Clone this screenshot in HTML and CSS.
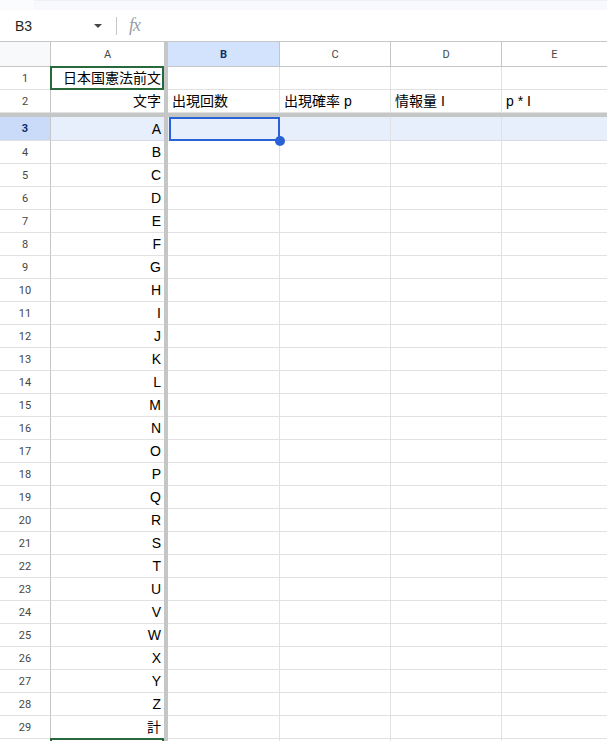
FILE: index.html
```html
<!DOCTYPE html>
<html lang="ja">
<head>
    <meta charset="UTF-8">
    <title>日本国憲法前文</title>
    <link rel="stylesheet" href="styles.css">
</head>
<body>
    <div class="top-strip"><div class="top-strip-inner"></div></div>

    <div class="formula-bar">
        <div class="name-box">
            <span class="name-ref">B3</span>
            <span class="name-arrow"></span>
        </div>
        <div class="fb-sep"></div>
        <span class="fx">fx</span>
    </div>

    <div class="sheet">
        <div class="row col-head">
            <div class="rh corner"></div>
            <div class="c a">A</div>
            <div class="fz"></div>
            <div class="c b sel-head">B</div>
            <div class="c">C</div>
            <div class="c">D</div>
            <div class="c e">E</div>
        </div>
        <div class="row">
            <div class="rh">1</div>
            <div class="c a r title-cell">日本国憲法前文</div>
            <div class="fz"></div>
            <div class="c b"></div>
            <div class="c"></div>
            <div class="c"></div>
            <div class="c e"></div>
        </div>
        <div class="row">
            <div class="rh">2</div>
            <div class="c a r">文字</div>
            <div class="fz"></div>
            <div class="c b">出現回数</div>
            <div class="c">出現確率 p</div>
            <div class="c">情報量 I</div>
            <div class="c e">p * I</div>
        </div>
        <div class="freeze-row"></div>
        <div class="row sel-row">
            <div class="rh">3</div>
            <div class="c a r">A</div>
            <div class="fz"></div>
            <div class="c b active"><span class="handle"></span></div>
            <div class="c"></div>
            <div class="c"></div>
            <div class="c e"></div>
        </div>
        <div class="row"><div class="rh">4</div><div class="c a r">B</div><div class="fz"></div><div class="c b"></div><div class="c"></div><div class="c"></div><div class="c e"></div></div>
        <div class="row"><div class="rh">5</div><div class="c a r">C</div><div class="fz"></div><div class="c b"></div><div class="c"></div><div class="c"></div><div class="c e"></div></div>
        <div class="row"><div class="rh">6</div><div class="c a r">D</div><div class="fz"></div><div class="c b"></div><div class="c"></div><div class="c"></div><div class="c e"></div></div>
        <div class="row"><div class="rh">7</div><div class="c a r">E</div><div class="fz"></div><div class="c b"></div><div class="c"></div><div class="c"></div><div class="c e"></div></div>
        <div class="row"><div class="rh">8</div><div class="c a r">F</div><div class="fz"></div><div class="c b"></div><div class="c"></div><div class="c"></div><div class="c e"></div></div>
        <div class="row"><div class="rh">9</div><div class="c a r">G</div><div class="fz"></div><div class="c b"></div><div class="c"></div><div class="c"></div><div class="c e"></div></div>
        <div class="row"><div class="rh">10</div><div class="c a r">H</div><div class="fz"></div><div class="c b"></div><div class="c"></div><div class="c"></div><div class="c e"></div></div>
        <div class="row"><div class="rh">11</div><div class="c a r">I</div><div class="fz"></div><div class="c b"></div><div class="c"></div><div class="c"></div><div class="c e"></div></div>
        <div class="row"><div class="rh">12</div><div class="c a r">J</div><div class="fz"></div><div class="c b"></div><div class="c"></div><div class="c"></div><div class="c e"></div></div>
        <div class="row"><div class="rh">13</div><div class="c a r">K</div><div class="fz"></div><div class="c b"></div><div class="c"></div><div class="c"></div><div class="c e"></div></div>
        <div class="row"><div class="rh">14</div><div class="c a r">L</div><div class="fz"></div><div class="c b"></div><div class="c"></div><div class="c"></div><div class="c e"></div></div>
        <div class="row"><div class="rh">15</div><div class="c a r">M</div><div class="fz"></div><div class="c b"></div><div class="c"></div><div class="c"></div><div class="c e"></div></div>
        <div class="row"><div class="rh">16</div><div class="c a r">N</div><div class="fz"></div><div class="c b"></div><div class="c"></div><div class="c"></div><div class="c e"></div></div>
        <div class="row"><div class="rh">17</div><div class="c a r">O</div><div class="fz"></div><div class="c b"></div><div class="c"></div><div class="c"></div><div class="c e"></div></div>
        <div class="row"><div class="rh">18</div><div class="c a r">P</div><div class="fz"></div><div class="c b"></div><div class="c"></div><div class="c"></div><div class="c e"></div></div>
        <div class="row"><div class="rh">19</div><div class="c a r">Q</div><div class="fz"></div><div class="c b"></div><div class="c"></div><div class="c"></div><div class="c e"></div></div>
        <div class="row"><div class="rh">20</div><div class="c a r">R</div><div class="fz"></div><div class="c b"></div><div class="c"></div><div class="c"></div><div class="c e"></div></div>
        <div class="row"><div class="rh">21</div><div class="c a r">S</div><div class="fz"></div><div class="c b"></div><div class="c"></div><div class="c"></div><div class="c e"></div></div>
        <div class="row"><div class="rh">22</div><div class="c a r">T</div><div class="fz"></div><div class="c b"></div><div class="c"></div><div class="c"></div><div class="c e"></div></div>
        <div class="row"><div class="rh">23</div><div class="c a r">U</div><div class="fz"></div><div class="c b"></div><div class="c"></div><div class="c"></div><div class="c e"></div></div>
        <div class="row"><div class="rh">24</div><div class="c a r">V</div><div class="fz"></div><div class="c b"></div><div class="c"></div><div class="c"></div><div class="c e"></div></div>
        <div class="row"><div class="rh">25</div><div class="c a r">W</div><div class="fz"></div><div class="c b"></div><div class="c"></div><div class="c"></div><div class="c e"></div></div>
        <div class="row"><div class="rh">26</div><div class="c a r">X</div><div class="fz"></div><div class="c b"></div><div class="c"></div><div class="c"></div><div class="c e"></div></div>
        <div class="row"><div class="rh">27</div><div class="c a r">Y</div><div class="fz"></div><div class="c b"></div><div class="c"></div><div class="c"></div><div class="c e"></div></div>
        <div class="row"><div class="rh">28</div><div class="c a r">Z</div><div class="fz"></div><div class="c b"></div><div class="c"></div><div class="c"></div><div class="c e"></div></div>
        <div class="row"><div class="rh">29</div><div class="c a r">計</div><div class="fz"></div><div class="c b"></div><div class="c"></div><div class="c"></div><div class="c e"></div></div>
        <div class="row"><div class="rh"></div><div class="c a r title-cell"></div><div class="fz"></div><div class="c b"></div><div class="c"></div><div class="c"></div><div class="c e"></div></div>
    </div>
</body>
</html>
```

FILE: styles.css
```css
body {
    margin: 0;
    background-color: #ffffff;
    font-family: "Liberation Sans", Arial, "Noto Sans CJK JP", sans-serif;
    color: #000000;
    overflow: hidden;
}
.top-strip {
    height: 10px;
    background-color: #fbfcfe;
    display: flex;
    justify-content: flex-end;
}
.top-strip-inner {
    width: calc(100% - 34px);
    border-top: 1px solid #edf0f6;
    background-color: #f8f9fd;
}
.formula-bar {
    height: 31px;
    border-bottom: 1px solid #c4c7c5;
    display: flex;
    align-items: center;
}
.name-box {
    width: 116px;
    display: flex;
    align-items: center;
    justify-content: space-between;
    padding: 0 14px 0 15px;
    box-sizing: border-box;
}
.name-ref {
    font-size: 14px;
    color: #1f1f1f;
}
.name-arrow {
    width: 0;
    height: 0;
    border-left: 4px solid transparent;
    border-right: 4px solid transparent;
    border-top: 4px solid #444746;
}
.fb-sep {
    width: 1px;
    height: 18px;
    background-color: #c4c7c5;
}
.fx {
    font-family: "Liberation Serif", "DejaVu Serif", serif;
    font-style: italic;
    font-size: 18px;
    color: #9aa0a6;
    margin-left: 12px;
    letter-spacing: -1px;
}
.sheet {
    font-size: 14px;
}
.row {
    display: flex;
    height: 23px;
}
.rh {
    width: 51px;
    flex-shrink: 0;
    box-sizing: border-box;
    border-right: 1px solid #c4c7c5;
    border-bottom: 1px solid #e1e1e1;
    font-family: Roboto, "Liberation Sans", sans-serif;
    font-size: 11px;
    color: #444746;
    display: flex;
    align-items: center;
    justify-content: center;
}
.c {
    width: 111px;
    flex-shrink: 0;
    box-sizing: border-box;
    border-right: 1px solid #e1e1e1;
    border-bottom: 1px solid #e1e1e1;
    padding: 0 3px 2px 4px;
    display: flex;
    align-items: flex-end;
    white-space: nowrap;
    overflow: hidden;
    line-height: 17px;
}
.c.a {
    width: 113px;
    border-right: none;
}
.c.b {
    width: 112px;
}
.c.e {
    flex: 1;
    border-right: none;
}
.c.r {
    justify-content: flex-end;
}
.fz {
    width: 4px;
    flex-shrink: 0;
    background-color: #c4c7c5;
}
.col-head {
    height: 25px;
}
.col-head .rh {
    background-color: #f8f9fa;
    border-bottom: 1px solid #c4c7c5;
}
.col-head .c {
    font-family: Roboto, "Liberation Sans", sans-serif;
    font-size: 11px;
    color: #444746;
    justify-content: center;
    align-items: center;
    padding: 0;
    border-right: 1px solid #c4c7c5;
    border-bottom: 1px solid #c4c7c5;
}
.col-head .c.a,
.col-head .c.e {
    border-right: none;
}
.col-head .sel-head {
    background-color: #d3e3fd;
    color: #0b306b;
    font-weight: bold;
}
.title-cell {
    position: relative;
    overflow: visible;
}
.title-cell::after {
    content: "";
    position: absolute;
    top: -1px;
    left: -1px;
    right: 0;
    bottom: -1px;
    border: 2px solid #27693a;
}
.freeze-row {
    height: 4px;
    background-color: #c4c7c5;
}
.sel-row {
    height: 24px;
    background-color: #e8effc;
}
.sel-row .rh {
    background-color: #c9dbf8;
    color: #0b306b;
    font-weight: bold;
}
.sel-row .c {
    border-bottom-color: #d6dbe4;
}
.active {
    position: relative;
    overflow: visible;
}
.active::after {
    content: "";
    position: absolute;
    top: 0;
    left: 1px;
    right: -1px;
    bottom: -1px;
    border: 2px solid #2a62d6;
}
.handle {
    position: absolute;
    right: -6px;
    bottom: -6px;
    width: 10px;
    height: 10px;
    border-radius: 50%;
    background-color: #2a62d6;
    z-index: 2;
}
```
